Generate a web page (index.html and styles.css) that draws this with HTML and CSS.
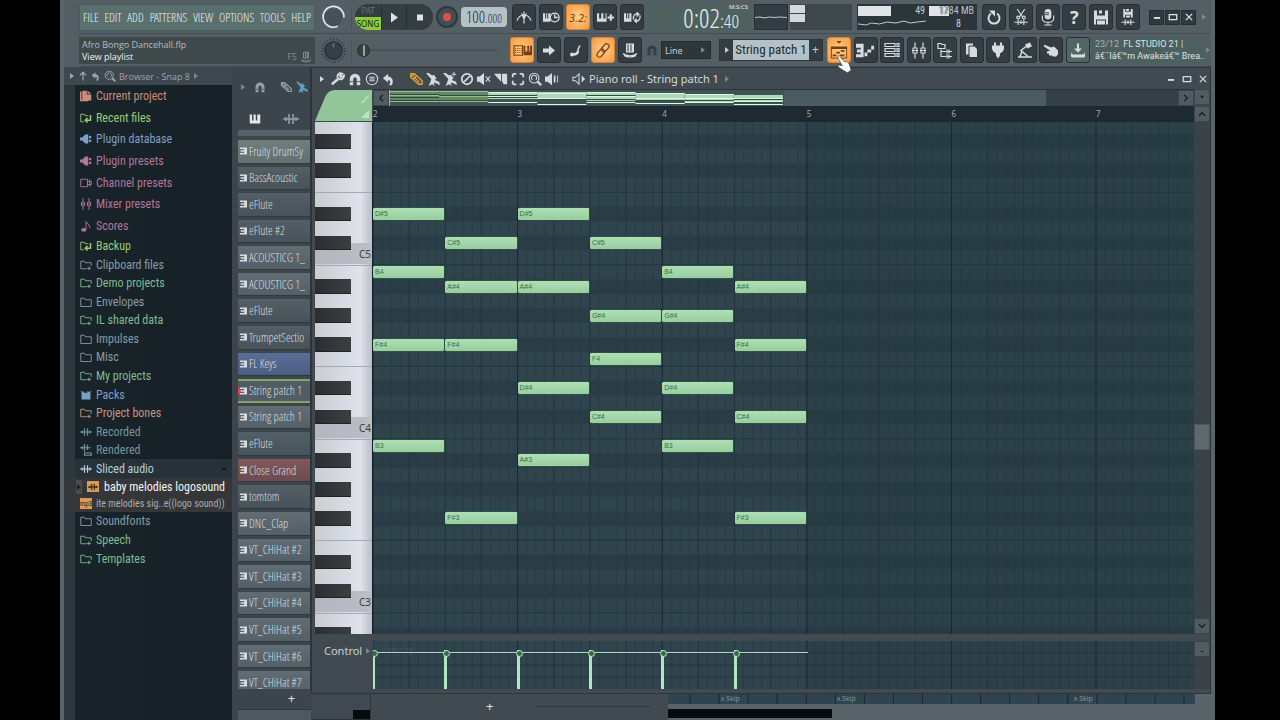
FILE: index.html
```html
<!DOCTYPE html>
<html lang="en">
<head>
<meta charset="utf-8">
<meta name="viewport" content="width=device-width, initial-scale=1">
<title>Piano roll - String patch 1</title>
<link rel="stylesheet" href="styles.css">
</head>
<body>
<svg class="sprite" aria-hidden="true">
  <symbol id="tri" viewBox="2 0 12 16"><path fill="currentColor" d="M4 2l8 6-8 6z"/></symbol>
  <symbol id="play" viewBox="0 0 16 16"><path fill="currentColor" d="M5 3l7 5-7 5z"/></symbol>
  <symbol id="stop" viewBox="0 0 16 16"><path fill="currentColor" d="M5 5h6v6H5z"/></symbol>
  <symbol id="metro" viewBox="0 0 16 16"><path class="s" d="M8 2v12M8 5C4 6 2 8 1 11M8 5c4 1 6 3 7 6"/><path fill="currentColor" d="M5 3l3 3 3-3-2 6H7z"/></symbol>
  <symbol id="wait" viewBox="0 0 16 16"><path fill="currentColor" d="M0 4h2v5h1V4h1v5h1V4h2v8H0z"/><circle class="s" cx="11" cy="8" r="4.2"/><path class="s" d="M11 5v3h3"/></symbol>
  <symbol id="keysplus" viewBox="0 0 16 16"><path fill="currentColor" d="M0 4h2v5h2V4h2v5h2V4h1v8H0zM10 7h2V5h2v2h2v2h-2v2h-2V9h-2z"/></symbol>
  <symbol id="keysloop" viewBox="0 0 16 16"><path fill="currentColor" d="M0 4h2v5h1V4h1v5h1V4h2v8H0z"/><path class="s" d="M9 10C8 6 11 4 13 5M15 6c1 4-2 6-4 5M12 3l2 2-2 2M12 9l-2 2 2 2"/></symbol>
  <symbol id="typing" viewBox="0 0 20 16"><path class="s" d="M1 3h9v10H1z"/><path stroke="currentColor" stroke-dasharray="1 1" d="M2 6h7M2 8h7M2 10h7"/><path fill="currentColor" d="M11 3h2v6h2V3h2v6h1V3h2v10h-9z"/></symbol>
  <symbol id="arrow" viewBox="0 0 16 16"><path fill="currentColor" d="M2 6h6V3l6 5-6 5v-3H2z"/></symbol>
  <symbol id="step" viewBox="0 0 16 16"><circle cx="4" cy="12" r="2" fill="currentColor"/><path fill="none" stroke="currentColor" stroke-width="2.5" d="M5 12c3 0 5-1 5-4"/><path fill="none" stroke="currentColor" stroke-width="1.500" d="M10 8c0-2 1-3 2-5"/></symbol>
  <symbol id="link" viewBox="0 0 16 16"><g class="s" transform="rotate(-50 8 8)"><rect x="0" y="5.5" width="9" height="5" rx="2.5"/><rect x="7" y="5.5" width="9" height="5" rx="2.5"/></g></symbol>
  <symbol id="hat" viewBox="0 0 16 16"><path fill="currentColor" d="M4 1h8v9H4z"/><path class="s" d="M1 11c3 3 11 3 14 0M2 13c3 2 9 2 12 0"/><path stroke="#30383c" d="M6 2v7M9 2v7"/></symbol>
  <symbol id="magnet" viewBox="0 0 16 16"><path fill="none" stroke="currentColor" stroke-width="4" d="M4 15V8a4 4 0 018 0v7"/><path stroke="#424b50" d="M1 11h5M10 11h5"/></symbol>
  <symbol id="playlist" viewBox="0 0 20 20"><path fill="#783c16" d="M7 0h6l-3 3zM1 6h18v3H1z"/><path fill="none" stroke="#783c16" d="M1.500 7v12h17V7"/><path stroke="#783c16" stroke-width="2" d="M3 16h4M7 13h4M12 11h4M11 16h5"/></symbol>
  <symbol id="pianoroll" viewBox="0 0 20 16"><path fill="currentColor" d="M0 1h8v14H0v-3h5v-2H1V7h4V5H0zM9 10h3v4H9zM12 7h4v3h-4zM16 3h3v4h-3z"/></symbol>
  <symbol id="rack" viewBox="0 0 16 16"><path class="s" d="M1 1h10v3H1zM1 6h10v3H1zM1 11h10v3H1zM13 1h2v3h-2zM13 6h2v3h-2zM13 11h2v3h-2z"/></symbol>
  <symbol id="mixer" viewBox="0 0 16 16"><path class="s" d="M4 0v5M4 11v5M12 0v5M12 11v5M2 5.500h4v5H2zM10 5.500h4v5h-4zM1 8h6M9 8h6"/></symbol>
  <symbol id="tree" viewBox="0 0 16 16"><path class="s" d="M1 1h3l1 1h3v4H1zM4 7v7h5M4 9h5M10 7v4M10 12v4M12 7v4M12 12v4M10 9h5M10 14h5"/></symbol>
  <symbol id="copy" viewBox="0 0 16 16"><path fill="currentColor" d="M2 1h7v11H2z"/><path fill="currentColor" stroke="#30383c" d="M5 3.500h5.500l3 3V15H5z"/></symbol>
  <symbol id="plug" viewBox="0 0 16 16"><path fill="currentColor" d="M4 0h2v3h4V0h2v3h2v3c0 2-2 4-4 5v2l-2 3-2-3v-2C4 10 2 8 2 6V3h2z"/></symbol>
  <symbol id="lamp" viewBox="0 0 16 16"><path fill="currentColor" d="M8 2l5-2 2 4-5 2z"/><path fill="none" stroke="currentColor" stroke-width="1.500" d="M9 4L4 8l7 6M1 14.500h14M5 9l-2 5"/></symbol>
  <symbol id="touch" viewBox="0 0 16 16"><path fill="currentColor" d="M1 2l7 3 3-1 4 4v4l-2 2-3 0-1-1H6l0-2-2 0 0-2 3-1L1 4z"/></symbol>
  <symbol id="download" viewBox="0 0 16 16"><path fill="currentColor" d="M7 1h2v5h3l-4 4-4-4h3z"/><path fill="currentColor" d="M1 9c0 2 1 3 3 3h8c2 0 3-1 3-3v5l-1 1H2l-1-1z"/></symbol>
  <symbol id="reload" viewBox="0 0 16 16"><path fill="none" stroke="currentColor" stroke-width="2" d="M5 4a5.500 5.500 0 106 0"/><path fill="currentColor" d="M3 1h6v6z"/></symbol>
  <symbol id="cut" viewBox="0 0 16 18"><path class="s" d="M4 0l6 9M12 0L6 9M1 14h14M5 11v6M8 12v4M11 11v6"/><circle class="s" cx="5" cy="9" r="1.500"/><circle class="s" cx="11" cy="9" r="1.500"/></symbol>
  <symbol id="mic" viewBox="0 0 16 18"><rect x="4.500" y="0" width="7" height="11" rx="3.500" fill="currentColor"/><path class="s" d="M2 7v3c0 2 2 4 4 4h4c2 0 4-2 4-4V7M8 14v3M4 17h8"/><path stroke="#30383c" d="M5 4h4M5 6h4"/></symbol>
  <symbol id="save" viewBox="0 0 16 16"><path fill="currentColor" d="M1 1h3v5h8V1h3v14h-2v-5H3v5H1zM6 1h3v3H6zM4 11h8v4H4z"/></symbol>
  <symbol id="savenew" viewBox="0 0 16 18"><path fill="currentColor" d="M3 0h2v3h6V0h2v9h-2V6H5v3H3zM6 0h3v2H6zM6 7h4v2H6z"/><path class="s" d="M1 14h14M5 11v6M8 12v4M11 11v6"/></symbol>
  <symbol id="min" viewBox="0 0 16 16"><path fill="currentColor" d="M3 8h10v3H3z"/></symbol>
  <symbol id="max" viewBox="0 0 16 16"><path fill="none" stroke="currentColor" stroke-width="2" d="M2 4h12v8H2z"/></symbol>
  <symbol id="close" viewBox="0 0 16 16"><path fill="none" stroke="currentColor" stroke-width="2" d="M3 3l10 10M13 3L3 13"/></symbol>
  <symbol id="wrench" viewBox="0 0 16 16"><path fill="none" stroke="currentColor" stroke-width="3" d="M1 14l7-6"/><path fill="none" stroke="currentColor" stroke-width="2" d="M13 2C9 0 6 4 8 7c3 3 7 1 7-3l-4 2-1-2z"/></symbol>
  <symbol id="menu" viewBox="0 0 16 16"><circle cx="8" cy="8" r="6.500" class="s"/><path class="s" d="M5 6h6M5 8h6M5 10h6"/></symbol>
  <symbol id="undo" viewBox="0 0 16 16"><path fill="currentColor" d="M1 7l6-5v3c5 0 7 6 4 10H8c2-3 2-6-1-6v3z"/></symbol>
  <symbol id="pencil" viewBox="0 0 16 16"><path fill="none" stroke="currentColor" stroke-width="1.600" d="M2 2h4l9 8v4h-4L2 6zM2 6l4-4M5 8l4-4M5 5l7 7"/></symbol>
  <symbol id="brush" viewBox="0 0 16 16"><path fill="currentColor" d="M0 1h3l4 3 2-1 3 4-2 2 5 2 1 4-2-1-4-2-1 1 1 3-3-2-4 2 2-5 1-3z"/></symbol>
  <symbol id="brushp" viewBox="0 0 16 16"><path fill="currentColor" d="M0 1h3l4 3 2-1 3 4-2 2 5 2 1 4-2-1-4-2-1 1 1 3-3-2-4 2 2-5 1-3zM12 0h1v2h2v1h-2v2h-1V3h-2V2h2z"/></symbol>
  <symbol id="ban" viewBox="0 0 16 16"><path fill="none" stroke="currentColor" stroke-width="2" d="M8 2a6 6 0 100 12A6 6 0 008 2zM4 12l8-8"/></symbol>
  <symbol id="mute" viewBox="0 0 16 16"><path fill="currentColor" d="M0 5h3l5-4v14l-5-4H0z"/><path class="s" d="M10 5l5 6M15 5l-5 6"/></symbol>
  <symbol id="slice" viewBox="0 0 16 16"><path fill="currentColor" d="M0 2h8v9zM9 2h6v12h-4l-2-4z"/></symbol>
  <symbol id="select" viewBox="0 0 16 16"><path fill="none" stroke="currentColor" stroke-width="2" d="M6 2H3L2 3v3M10 2h3l1 1v3M2 10v3l1 1h3M14 10v3l-1 1h-3"/></symbol>
  <symbol id="zoom" viewBox="0 0 16 16"><circle class="s" cx="7" cy="7" r="5.500"/><path class="s" d="M5 9a3 3 0 114 0"/><path stroke="currentColor" stroke-width="2.500" d="M11 11l4 4"/></symbol>
  <symbol id="playback" viewBox="0 0 16 16"><path fill="currentColor" d="M0 5h3l5-4v14l-5-4H0zM10 4h2v8h-2zM14 4h1v8h-1z"/></symbol>
  <symbol id="speaker" viewBox="0 0 16 16"><path class="s" d="M1 6h3l4-4v12l-4-4H1z"/><path fill="currentColor" d="M11 4l4 4-4 4z"/></symbol>
  <symbol id="up" viewBox="0 0 16 16"><path fill="none" stroke="currentColor" stroke-width="2" d="M8 15V2M3 7l5-5 5 5"/></symbol>
  <symbol id="chev" viewBox="0 0 16 16"><path fill="none" stroke="currentColor" stroke-width="2" d="M3 11l5-5 5 5"/></symbol>
  <symbol id="keys" viewBox="0 0 16 16"><path fill="currentColor" d="M1 2h3v8h2V2h3v8h2V2h4v12H1z"/></symbol>
  <symbol id="wave" viewBox="0 0 16 16"><path fill="none" stroke="currentColor" stroke-width="1.600" d="M0 8h16M3 6v4M6 3v10M10 3v10M13 6v4"/></symbol>
  <symbol id="rendered" viewBox="0 0 16 16"><path fill="none" stroke="currentColor" stroke-width="1.600" d="M0 5h14M3 3v4M6 0v10M10 1v7M6 12h9v3H6z"/></symbol>
  <symbol id="book" viewBox="0 0 16 16"><path fill="currentColor" d="M0 2h2v11h9v2H0zM3 1h6v5h6v8H3zM10 1l5 4h-5z"/></symbol>
  <symbol id="folder" viewBox="0 0 16 16"><path class="s" d="M1 3h5l1 2h8v9H1z"/></symbol>
  <symbol id="folderx" viewBox="0 0 16 16"><path class="s" d="M9 13H1V3h5l1 2h8v4M12 10v5M9.500 12.500h5"/></symbol>
  <symbol id="foldergo" viewBox="0 0 16 16"><path class="s" d="M5 13H1V3h5l1 2h4"/><path fill="none" stroke="currentColor" stroke-width="2" d="M14 4v7H7M10 8l-3 3 3 3"/></symbol>
  <symbol id="plugin" viewBox="0 0 16 16"><path fill="currentColor" d="M0 6h3l4-4h4v12H7l-4-4H0zM12 4h3v3h-3zM12 9h3v3h-3z"/></symbol>
  <symbol id="chan" viewBox="0 0 16 16"><path class="s" d="M1 3h9v10H1zM13 3v10M10 6h5v4h-5z"/></symbol>
  <symbol id="note" viewBox="0 0 16 16"><ellipse cx="5" cy="13" rx="3.500" ry="2.500" fill="currentColor"/><path class="s" d="M8 13V2l5 6v3"/></symbol>
  <symbol id="packs" viewBox="0 0 16 16"><path fill="currentColor" d="M0 2l4 2 1-2v3h5V2l2 2 4-2-2 2v10H2V4z"/></symbol>
  <symbol id="plugch" viewBox="0 0 10 10"><path fill="currentColor" d="M0 0h10v10H0V8h6V6H1V4h5V2H0z"/></symbol>
  <symbol id="hand" viewBox="0 0 16 20"><path fill="#fff" stroke="#222" stroke-width=".6" d="M1 1c1-1 2 0 3 1l4 5 5 1 2 5 1 4-4 3-5-3-6-4 1-2 4 1-5-9z"/></symbol>
</svg>

<div class="app">
  <header class="toolbar">
    <div class="bar">
      <nav class="menus">
        <button>FILE</button><button>EDIT</button><button>ADD</button><button>PATTERNS</button><button>VIEW</button><button>OPTIONS</button><button>TOOLS</button><button>HELP</button>
      </nav>
      <div class="knobcell"><svg class="knob" viewBox="0 0 24 24"><circle cx="12" cy="12" r="8.500" fill="#465056"/><path fill="none" stroke="#e2e8ea" stroke-width="1.600" d="M16 20.500A10 10 0 1122 12"/></svg></div>
      <div class="transport">
        <div class="mode"><span class="pat">PAT</span><span class="song">SONG</span></div>
        <button aria-label="Play"><svg class="i"><use href="#play"/></svg></button>
        <button class="stop" aria-label="Stop"><svg class="i"><use href="#stop"/></svg></button>
      </div>
      <button class="rec" aria-label="Record"><span class="recdot"></span></button>
      <div class="tempo"><span>100</span><small>.000</small></div>
      <div class="btns">
        <button class="b" aria-label="Metronome"><svg class="i"><use href="#metro"/></svg></button>
        <button class="b" aria-label="Wait for input"><svg class="i w"><use href="#wait"/></svg></button>
        <button class="b on">3.2:</button>
        <button class="b" aria-label="Overdub"><svg class="i w"><use href="#keysplus"/></svg></button>
        <button class="b" aria-label="Loop record"><svg class="i w"><use href="#keysloop"/></svg></button>
      </div>
      <div class="time"><span class="clock">0:02<small>:40</small></span><span class="unit">M:S:CS</span></div>
      <div class="scope"><svg viewBox="0 0 32 26" preserveAspectRatio="none"><path fill="none" stroke="#c5d0d3" d="M0 13.500l5-.5 4 1 6-1 5 .5 5-.5 7 .5"/></svg></div>
      <div class="peak"><i></i><i></i></div>
      <div class="cpu">
        <i class="load"></i><span>49</span><i class="mem"></i><span class="mb">1784 MB</span>
        <svg class="cpuline" viewBox="0 0 70 8"><path fill="none" stroke="#c5d0d3" d="M0 5l8 1 6-2 8 1 8-2 9 1 8-2 7 2 7-1 9-1"/></svg><span class="poly">8</span>
      </div>
      <div class="btns files-group">
        <button class="b" aria-label="Undo"><svg class="i"><use href="#reload"/></svg></button>
        <button class="b" aria-label="Cut"><svg class="i"><use href="#cut"/></svg></button>
        <button class="b" aria-label="Record audio"><svg class="i"><use href="#mic"/></svg></button>
        <button class="b q" aria-label="Help">?</button>
        <button class="b" aria-label="Save"><svg class="i"><use href="#save"/></svg></button>
        <button class="b" aria-label="Save as"><svg class="i"><use href="#savenew"/></svg></button>
      </div>
      <div class="winctl">
        <button aria-label="Minimize"><svg class="xs"><use href="#min"/></svg></button><button aria-label="Maximize"><svg class="xs"><use href="#max"/></svg></button><button aria-label="Close"><svg class="xs"><use href="#close"/></svg></button>
      </div>
      <svg class="tiny faint more"><use href="#tri"/></svg>
    </div>

    <div class="bar">
      <div class="hint"><div><p class="file">Afro Bongo Dancehall.flp</p><p class="tip">View playlist</p></div><div class="short">F5 <svg class="s12"><use href="#hat"/></svg></div></div>
      <div class="knobcell"><svg class="knob" viewBox="0 0 24 24"><circle cx="12" cy="12" r="11" fill="none" stroke="#343d42" stroke-width="2" stroke-dasharray="1 2"/><circle cx="12" cy="12" r="8.500" fill="#363f45" stroke="#252d31"/><path stroke="#66737a" stroke-width="1.500" d="M12 5v4"/></svg></div>
      <div class="pos"><input type="range" min="0" max="100" value="0" aria-label="Song position"></div>
      <div class="btns">
        <button class="b on" aria-label="Typing keyboard"><svg class="i w"><use href="#typing"/></svg></button>
        <button class="b" aria-label="Step"><svg class="i"><use href="#arrow"/></svg></button>
        <button class="b" aria-label="Slide"><svg class="i"><use href="#step"/></svg></button>
        <button class="b on" aria-label="Link"><svg class="i"><use href="#link"/></svg></button>
        <button class="b" aria-label="Hat"><svg class="i"><use href="#hat"/></svg></button>
      </div>
      <div class="snap"><svg class="s12 dim"><use href="#magnet"/></svg><button class="snapbtn">Line<svg class="tiny faint"><use href="#tri"/></svg></button></div>
      <div class="pattern"><button aria-label="Pattern list"><svg class="tiny"><use href="#tri"/></svg></button><span class="pname">String patch 1</span><button aria-label="Add pattern">+</button></div>
      <div class="btns panels-group">
        <button class="b on" aria-label="View playlist"><svg class="i big"><use href="#playlist"/></svg><svg class="cursor"><use href="#hand"/></svg></button>
        <button class="b" aria-label="Piano roll"><svg class="i w"><use href="#pianoroll"/></svg></button>
        <button class="b" aria-label="Channel rack"><svg class="i"><use href="#rack"/></svg></button>
        <button class="b" aria-label="Mixer"><svg class="i"><use href="#mixer"/></svg></button>
        <button class="b" aria-label="Browser"><svg class="i"><use href="#tree"/></svg></button>
        <button class="b" aria-label="Copy"><svg class="i"><use href="#copy"/></svg></button>
        <button class="b" aria-label="Plugins"><svg class="i"><use href="#plug"/></svg></button>
        <button class="b" aria-label="Tempo tapper"><svg class="i"><use href="#lamp"/></svg></button>
        <button class="b" aria-label="Touch"><svg class="i"><use href="#touch"/></svg></button>
        <button class="b dl" aria-label="Download"><svg class="i"><use href="#download"/></svg></button>
      </div>
      <div class="news"><div><p><span class="date">23/12</span> FL STUDIO 21 |</p><p>â€˜Iâ€™m Awakeâ€™ Brea..</p></div><svg class="tiny faint"><use href="#tri"/></svg></div>
    </div>
  </header>

  <div class="work">
    <aside class="browser">
      <div class="bhead"><svg class="tiny"><use href="#tri"/></svg><svg class="s10"><use href="#up"/></svg><svg class="s10"><use href="#undo"/></svg><svg class="s12"><use href="#zoom"/></svg><span>Browser - Snap 8</span><svg class="tiny faint"><use href="#tri"/></svg></div>
      <div class="bbody">
        <ul class="tree top">
          <li class="c-red"><svg class="s12"><use href="#book"/></svg>Current project</li>
          <li class="c-lime"><svg class="s12"><use href="#foldergo"/></svg>Recent files</li>
          <li class="c-blue"><svg class="s12"><use href="#plugin"/></svg>Plugin database</li>
          <li class="c-pink"><svg class="s12"><use href="#plugin"/></svg>Plugin presets</li>
          <li class="c-pink"><svg class="s12"><use href="#chan"/></svg>Channel presets</li>
          <li class="c-pink"><svg class="s12"><use href="#mixer"/></svg>Mixer presets</li>
          <li class="c-pink"><svg class="s12"><use href="#note"/></svg>Scores</li>
        </ul>
        <ul class="tree mid">
          <li class="c-lime"><svg class="s12"><use href="#foldergo"/></svg>Backup</li>
          <li class="c-gray"><svg class="s12"><use href="#folderx"/></svg>Clipboard files</li>
          <li class="c-green"><svg class="s12"><use href="#folderx"/></svg>Demo projects</li>
          <li class="c-gray"><svg class="s12"><use href="#folder"/></svg>Envelopes</li>
          <li class="c-green"><svg class="s12"><use href="#folderx"/></svg>IL shared data</li>
          <li class="c-gray"><svg class="s12"><use href="#folder"/></svg>Impulses</li>
          <li class="c-gray"><svg class="s12"><use href="#folder"/></svg>Misc</li>
          <li class="c-green"><svg class="s12"><use href="#folderx"/></svg>My projects</li>
          <li class="c-sky"><svg class="s12"><use href="#packs"/></svg>Packs</li>
          <li class="c-orange"><svg class="s12"><use href="#folderx"/></svg>Project bones</li>
          <li class="c-teal"><svg class="s12"><use href="#wave"/></svg>Recorded</li>
          <li class="c-teal"><svg class="s12"><use href="#rendered"/></svg>Rendered</li>
          <li class="c-open"><svg class="s12"><use href="#wave"/></svg>Sliced audio<span class="caret"></span></li>
        </ul>
        <ul class="tree files">
          <li class="sel"><span class="grip"><svg class="tiny"><use href="#tri"/></svg></span><span class="wav"><svg class="s10"><use href="#wave"/></svg></span>baby melodies logosound</li>
          <li class="mp3"><span class="wav">mp3</span>ite melodies sig..e((logo sound))</li>
        </ul>
        <ul class="tree end">
          <li class="c-gray"><svg class="s12"><use href="#folder"/></svg>Soundfonts</li>
          <li class="c-green"><svg class="s12"><use href="#folderx"/></svg>Speech</li>
          <li class="c-green"><svg class="s12"><use href="#folderx"/></svg>Templates</li>
        </ul>
      </div>
    </aside>

    <section class="rackcol">
      <div class="rackhead">
        <div class="rtools"><svg class="tiny faint"><use href="#tri"/></svg><svg class="s12"><use href="#magnet"/></svg><svg class="s12 push"><use href="#pencil"/></svg><svg class="s12 c-brush"><use href="#brush"/></svg></div>
        <div class="rtabs"><svg class="s12 bright"><use href="#keys"/></svg><svg class="s16"><use href="#wave"/></svg></div>
      </div>
      <div class="rackclip"><div class="sliver"></div><div class="channels" id="channels"></div></div>
      <button class="addch" aria-label="Add channel">+</button>
      <div class="rackfoot"></div>
    </section>

    <main class="stage">
      <section class="roll">
        <div class="title">
          <svg class="tiny"><use href="#tri"/></svg>
          <div class="tools">
            <svg class="s14"><use href="#wrench"/></svg><svg class="s14"><use href="#magnet"/></svg><svg class="s14"><use href="#menu"/></svg><svg class="s14"><use href="#undo"/></svg>
          </div>
          <div class="tools draw">
            <svg class="s14 amber"><use href="#pencil"/></svg><svg class="s14"><use href="#brush"/></svg><svg class="s14"><use href="#brushp"/></svg><svg class="s14"><use href="#ban"/></svg><svg class="s14"><use href="#mute"/></svg><svg class="s14"><use href="#slice"/></svg><svg class="s14"><use href="#select"/></svg><svg class="s14"><use href="#zoom"/></svg><svg class="s14"><use href="#playback"/></svg>
          </div>
          <svg class="s14"><use href="#speaker"/></svg>
          <h1>Piano roll - String patch 1</h1><svg class="tiny faint"><use href="#tri"/></svg>
          <div class="rollctl"><button aria-label="Minimize"><svg class="s10"><use href="#min"/></svg></button><button aria-label="Maximize"><svg class="s10"><use href="#max"/></svg></button><button aria-label="Close"><svg class="s10"><use href="#close"/></svg></button></div>
        </div>
        <div class="rollgrid">
          <svg class="corner" viewBox="0 0 58 32" preserveAspectRatio="none"><path fill="#93c59a" d="M0 31L10 8Q13 1 20 1h37v30z"/><path fill="none" stroke="#c0e2c4" stroke-width="1.500" d="M46 13c5 0 4-6 8-6"/><path fill="#c0e2c4" d="M54 20v8h-8z"/></svg>
          <div class="overview"><button class="sb" aria-label="Scroll left"><svg class="s10 left"><use href="#chev"/></svg></button><div class="mini"><svg id="mini" viewBox="0 0 790 16" preserveAspectRatio="none"></svg></div><button class="sb" aria-label="Scroll right"><svg class="s10 right"><use href="#chev"/></svg></button></div>
          <div class="sb">•</div>
          <div class="ruler" id="ruler"></div>
          <button class="sb" aria-label="Scroll up"><svg class="s10"><use href="#chev"/></svg></button>
          <div class="piano" id="piano"></div>
          <div class="canvas" id="canvas"><svg id="lines" viewBox="0 0 821 512" preserveAspectRatio="none"></svg></div>
          <div class="vscroll"><div class="thumb"></div><button class="sb" aria-label="Scroll down"><svg class="s10 down"><use href="#chev"/></svg></button></div>
          <div class="split">. . . .</div>
          <div class="control">Control<svg class="tiny faint"><use href="#tri"/></svg></div>
          <div class="velocity" id="velocity"><svg id="vlines" viewBox="0 0 821 48" preserveAspectRatio="none"></svg><span class="vname">Velocity</span><div class="vline"></div></div>
          <div class="vscroll"><button class="sb" aria-label="Zoom out">-</button></div>
        </div>
      </section>
      <div class="under">
        <div class="uleft"><div class="ublack"></div></div>
        <div class="upanel"><span class="plus">+</span><span class="hbar"></span></div>
        <div class="uplay"><div class="uclips"><svg id="ulines" viewBox="0 0 526 10" preserveAspectRatio="none"></svg><span class="clip c1">ʌ Skip</span><span class="clip c2">ʌ Skip</span><span class="clip c3">ʌ Skip</span></div><div class="ublk"></div></div>
      </div>
    </main>
  </div>
</div>
<script src="script.js"></script>
</body>
</html>
```
FILE: styles.css
```css
:root { --narrow: "Open Sans Condensed Light", "Roboto Condensed", Roboto, "Liberation Sans", sans-serif; --list: "Roboto Condensed", Roboto, "Liberation Sans", sans-serif; }
* { box-sizing: border-box; }
body { margin: 0; background: #000; color: #c6d0d4; font-family: "Noto Sans", sans-serif; font-size: 11px; }
p, ul, h1 { margin: 0; padding: 0; font-weight: 400; }
ul { list-style: none; }
button { margin: 0; padding: 0; border: 0; background: none; color: inherit; font: inherit; display: flex; align-items: center; justify-content: center; }
svg { display: block; flex: none; }
.sprite { position: absolute; width: 0; height: 0; }
.s { fill: none; stroke: currentColor; stroke-width: 1.2; }
.tiny { width: 6px; height: 8px; }
.xs, .s10 { width: 10px; height: 10px; }
.s12 { width: 12px; height: 12px; }
.s14 { width: 14px; height: 14px; }
.s16 { width: 16px; height: 16px; }
.faint { color: #7b878d; }
.dim { color: #353e43; }
.push { margin-left: auto; }
.left { transform: rotate(-90deg); }
.right { transform: rotate(90deg); }
.down { transform: rotate(180deg); }

.app { margin: 0 65px 0 60px; height: 100vh; display: flex; flex-direction: column; background: #434d53; border: solid #59646a; border-width: 0 4px; overflow: hidden; }

/* top toolbar */
.toolbar { background: #535e65; flex: none; padding: 1px 0 0 15px; }
.bar { display: flex; align-items: center; height: 33px; border-bottom: 1px solid #424c52; }
.menus { width: 236px; height: 27px; display: flex; align-items: center; justify-content: space-between; padding: 0 3px; background: #5a706e; border: 1px solid #4a5b5b; color: #eaf3f1; font-family: var(--narrow); font-size: 12px; }
.knobcell { width: 37px; display: flex; justify-content: center; border-right: 1px solid #48535a; }
.knob { width: 25px; height: 25px; }
.transport { display: flex; width: 78px; height: 26px; margin-left: 3px; background: #343d42; border-radius: 13px; overflow: hidden; color: #dde4e6; }
.transport button { width: 25px; border-left: 1px solid #272f33; }
.transport .stop { flex: 1; }
.mode { width: 26px; display: flex; flex-direction: column; text-align: center; font-size: 8px; line-height: 13px; }
.pat { color: #667077; }
.song { background: #8bcc3c; color: #0f2406; }
.rec { width: 22px; height: 22px; margin: 0 3px; border-radius: 50%; background: #454e54; border: 2px solid #2f383d; }
.recdot { width: 8px; height: 8px; border-radius: 50%; background: #e0504b; }
.tempo { width: 46px; height: 20px; margin-right: 5px; border-radius: 4px; background: #b5c1c8; color: #1f292e; display: flex; align-items: baseline; justify-content: center; font-family: var(--narrow); font-size: 16px; line-height: 20px; }
.tempo small { font-size: 12px; }
.btns { display: flex; gap: 3px; }
.files-group { width: 158px; gap: 0; justify-content: space-between; }
.panels-group { width: 263px; gap: 0; justify-content: space-between; }
.b { width: 24px; height: 26px; border: 1px solid #272f34; border-radius: 3px; background: #343d42; color: #d5dde0; position: relative; }
.b.on { background: radial-gradient(#ffcf85, #f59a43); border-color: #e5802d; color: #783c16; font-style: italic; font-size: 11px; }
.q { font-size: 18px; font-weight: 700; }
.i { width: 16px; height: 17px; }
.i.w { width: 19px; }
.i.big { width: 18px; height: 20px; }
.cursor { position: absolute; left: 9px; top: 17px; width: 14px; height: 18px; z-index: 5; }
.b.dl { background: #506763; }
.time { width: 104px; height: 26px; margin-left: 3px; background: #4e615f; position: relative; display: flex; justify-content: flex-end; padding-right: 12px; color: #e7eeec; }
.clock { font-family: var(--narrow); font-size: 26px; line-height: 28px; }
.clock small { font-size: 19px; }
.unit { position: absolute; right: 3px; top: 0; font-size: 6px; line-height: 7px; }
.scope { width: 34px; height: 26px; margin-left: 3px; background: #333d43; border: 1px solid #262f34; }
.scope svg { width: 100%; height: 100%; }
.peak { width: 62px; height: 26px; margin: 0 5px 0 2px; background: #3d474c; display: flex; flex-direction: column; gap: 1px; }
.peak i { width: 15px; height: 8px; background: #d2d9dc; }
.peak i:first-child { margin-top: 1px; }
.cpu { width: 120px; height: 26px; margin-right: 5px; background: #2b353a; display: grid; grid-template-columns: 34px 34px 1fr; grid-template-rows: 13px 13px; font-family: var(--list); font-size: 10px; line-height: 13px; text-align: right; position: relative; }
.cpu .load { background: #dfe5e7; margin: 2px 0 1px 1px; }
.cpu .mem { position: absolute; left: 72px; top: 2px; width: 20px; height: 10px; background: #dfe5e7; }
.mb { padding-right: 3px; position: relative; color: #b9c2c5; text-shadow: 0 0 1px #2b353a, 0 0 1px #2b353a; }
.cpuline { width: 68px; height: 8px; grid-column: 1 / 3; margin: 2px 1px; }
.poly { padding-right: 16px; }
.winctl { display: flex; gap: 1px; margin-left: 9px; }
.winctl button { width: 15px; height: 15px; background: #30393e; border: 1px solid #252d31; color: #dde4e6; }
.more { margin: 0 4px 0 auto; }
.hint { width: 236px; height: 27px; padding: 0 3px; background: #3f494c; display: flex; justify-content: space-between; align-items: flex-end; font-family: "Open Sans", sans-serif; font-size: 9px; line-height: 12px; }
.hint > div { padding-bottom: 1px; }
.file { color: #b3bdc0; }
.tip { color: #edf2f3; }
.short { display: flex; gap: 3px; color: #7e898d; }
.pos { width: 158px; padding: 0 12px 0 5px; }
.pos input { -webkit-appearance: none; appearance: none; display: block; width: 100%; margin: 0; height: 16px; background: linear-gradient(#48535a, #48535a) center / 100% 2px no-repeat; }
.pos input::-webkit-slider-thumb { -webkit-appearance: none; width: 13px; height: 13px; border-radius: 50%; border: 1px solid #232b2e; background: linear-gradient(90deg, #37423f 5px, #93a59f 5px, #93a59f 7px, #37423f 7px); }
.snap { width: 73px; display: flex; align-items: center; gap: 3px; margin-left: 4px; }
.snapbtn { width: 50px; height: 18px; padding: 0 4px 0 3px; justify-content: space-between; background: #2d363b; border: 1px solid #242c30; font-size: 9px; }
.pattern { width: 104px; height: 22px; margin-right: 4px; display: flex; border: 1px solid #2b3439; }
.pattern button { width: 13px; background: #333c41; font-size: 12px; line-height: 12px; }
.pname { flex: 1; background: #b3c1c8; color: #202a30; font-family: var(--list); font-size: 13px; line-height: 20px; text-align: center; white-space: nowrap; }
.news { flex: 1; min-width: 0; height: 27px; margin: 0 2px; padding-left: 3px; background: #4d605f; display: flex; align-items: center; justify-content: space-between; font-family: Roboto, sans-serif; font-size: 9px; line-height: 12px; color: #dbe5e4; white-space: nowrap; }
.date { color: #a5b3b3; padding-right: 2px; }

/* workspace */
.work { flex: 1; min-height: 0; display: flex; background: #3d474e; }
.browser { width: 168px; flex: none; display: flex; flex-direction: column; background: #2c373e; }
.bhead { height: 18px; display: flex; align-items: center; gap: 3px; padding-left: 5px; background: #3d474e; color: #9aa6ab; font-size: 9px; }
.bhead span { font-family: "Open Sans", sans-serif; }
.bbody { flex: 1; min-height: 0; margin-left: 11px; background: linear-gradient(90deg, #18242a, #171f27); font-family: var(--list); font-size: 12px; }
.tree { display: grid; grid-auto-rows: 1fr; margin-left: -10px; }
.tree li { display: flex; align-items: center; gap: 4px; padding-left: 15px; white-space: nowrap; }
.tree.top { height: 152px; }
.tree.mid { height: 241px; }
.tree.end { height: 56px; }
.tree.files { height: 34px; background: #353638; }
.c-red { color: #cb8d7c; }
.c-lime { color: #9acb73; }
.c-blue { color: #7f9fc7; }
.c-sky { color: #7ba0c5; }
.c-pink { color: #b37698; }
.c-gray { color: #879ba3; }
.c-green { color: #7fbb91; }
.c-orange { color: #cd9478; }
.c-teal { color: #75959a; }
.tree .c-open { color: #b9d2d6; background: #263139; margin-left: 10px; padding-left: 5px; }
.caret { margin: 0 6px 0 auto; width: 4px; height: 2px; background: #11181c; }
.wav { width: 12px; height: 11px; background: #d99a5b; color: #2a1b0d; display: flex; align-items: center; justify-content: center; font-size: 7px; }
.grip { width: 6px; height: 14px; background: #4a4b4c; color: #222; display: flex; align-items: center; }
.tree .sel { color: #f3f5f5; padding-left: 11px; gap: 5px; }
.tree .mp3 { color: #a8adaf; font-size: 10px; }

.rackcol { width: 79px; flex: none; padding-left: 6px; display: flex; flex-direction: column; background: #3b454b; }
.rackhead { height: 63px; padding-top: 11px; border-right: 1px solid #2b3439; color: #93a0a6; }
.rtools { height: 17px; display: flex; align-items: center; gap: 4px; padding: 0 2px; }
.rtools .s12:nth-child(2) { margin-left: 4px; }
.c-brush { color: #5f9fbd; }
.rtabs { display: flex; align-items: center; justify-content: space-around; padding-top: 13px; height: 34px; }
.bright { color: #e5eaec; }
.rackclip { flex: 1; min-height: 0; overflow: hidden; border-right: 1px solid #2b3439; }
.sliver { height: 6px; margin-bottom: 4px; background: #56626a; }
.channels { height: 555px; display: grid; grid-auto-rows: 1fr; gap: 3px; }
.ch { display: flex; align-items: center; gap: 2px; padding-left: 2px; overflow: hidden; white-space: nowrap; background: linear-gradient(#535f66, #475259); border-bottom: 1px solid #2f393e; color: #d5dde0; font-family: var(--narrow); font-size: 12px; }
.ch svg { width: 7px; height: 8px; }
.ch.light { background: linear-gradient(#6f7e7d, #62706f); }
.ch.mid { background: linear-gradient(#616d73, #546067); }
.ch.blue { background: linear-gradient(#5a6d96, #4c5d83); }
.ch.red { background: linear-gradient(#80585b, #6d4b4f); }
.ch.cur { border-top: 2px solid #84a562; border-bottom: 2px solid #84a562; padding-left: 0; gap: 2px; background: #515d63; }
.cur::before { content: ""; width: 0; height: 0; margin-right: -4px; border: solid transparent; border-width: 4px 0 4px 4px; border-left-color: #e04556; }
.addch { height: 20px; padding: 0 0 3px 34px; color: #dfe5e7; font-size: 13px; line-height: 14px; }
.rackfoot { height: 11px; background: #4d585f; border-top: 1px solid #2e373c; }

/* piano roll */
.stage { flex: 1; min-width: 0; display: flex; flex-direction: column; }
.roll { flex: 1; min-height: 0; display: flex; flex-direction: column; background: #414a50; border: 1px solid #2c353a; padding: 0 0 4px 3px; }
.title { height: 21px; flex: none; display: flex; align-items: center; padding-left: 4px; color: #d3dbde; }
.tools { display: flex; gap: 3px; margin-left: 6px; }
.draw { margin: 0 13px 0 13px; }
.amber { color: #dda032; }
.title h1 { font-size: 11px; margin: 0 5px 0 3px; white-space: nowrap; }
.rollctl { margin: 0 2px 0 auto; display: flex; gap: 6px; }
.rollgrid { flex: 1; min-height: 0; display: grid; grid-template-columns: 58px minmax(0, 1fr) 16px; grid-template-rows: 17px 16px minmax(0, 1fr) 7px 48px; }
.corner { grid-row: 1 / 3; width: 100%; height: 100%; }
.overview { display: flex; border-top: 1px solid #2a3338; }
.mini { flex: 1; background: #343f46; }
.mini svg { width: 100%; height: 100%; }
.sb { width: 16px; height: 16px; background: #505b62; border: 1px solid #3a444a; color: #161d20; text-align: center; line-height: 13px; font-size: 11px; }
.ruler { position: relative; overflow: hidden; background: #1d2a31; color: #9fabb0; font-size: 8px; line-height: 16px; }
.ruler span { position: absolute; }
.piano { position: relative; overflow: hidden; background: linear-gradient(90deg, #c9ced2, #dfe2eb 80%, #b9bec8); border-right: 1px solid #16222a; }
.piano div { position: absolute; left: 0; right: 0; }
.piano .bk { right: 21px; background: linear-gradient(90deg, #2c2f31, #3c3f41); border-bottom: 1px solid #222; }
.piano .ck { background: linear-gradient(90deg, #b3b6be, #bcbec6); color: #383e43; font-size: 10px; text-align: right; line-height: 22px; padding-right: 1px; }
.piano .ln { height: 1px; background: #a4a8af; }
.canvas, .velocity { position: relative; overflow: hidden; background: #30444d; }
.canvas svg, .velocity svg { position: absolute; left: 0; top: 0; width: 100%; height: 100%; }
.nt { position: absolute; height: 14px; padding-left: 2px; border: 1px solid #2e5340; border-width: 1px 1px 1px 0; border-radius: 2px; background: linear-gradient(#aedfb4, #98cd9f); color: #39704a; font-family: "Liberation Sans", sans-serif; font-size: 7px; line-height: 12px; }
.vscroll { background: #394248; display: flex; flex-direction: column; justify-content: flex-end; position: relative; }
.vscroll:last-child { justify-content: flex-start; }
.thumb { position: absolute; left: 0; top: 59%; width: 16px; height: 26px; background: #5d686f; border: 1px solid #4b565c; }
.split { grid-column: 1 / 4; text-align: center; font-size: 8px; line-height: 4px; color: #252d31; }
.control { display: flex; gap: 3px; height: 19px; align-items: center; padding-left: 9px; font-size: 11px; }
.vname { position: absolute; left: 8px; top: 3px; color: #40545d; font-size: 9px; line-height: 12px; }
.vline { position: absolute; left: 0; top: 11px; width: 53%; height: 1px; background: #b9d4c3; }
.vel { position: absolute; top: 9px; bottom: 0; width: 5px; margin-left: -2px; background: linear-gradient(#b1e6be, #b1e6be) center / 3px 100% no-repeat; }
.vel::before { content: ""; display: block; width: 5px; height: 5px; border: 1px solid #b1e6be; border-radius: 50%; background: #3a6650; }
.under { height: 26px; display: flex; background: #40494f; flex: none; }
.uleft { width: 59px; display: flex; align-items: flex-end; justify-content: flex-end; border-bottom: 1px solid #2a3338; }
.ublack { width: 17px; height: 9px; background: #060c0e; }
.upanel { width: 298px; display: flex; align-items: center; justify-content: space-between; padding: 0 18px 2px 115px; background: #424a51; color: #dfe5e7; font-size: 13px; border-left: 1px solid #2d363b; }
.hbar { width: 114px; height: 1px; background: #2c353a; }
.uplay { flex: 1; min-width: 0; display: flex; flex-direction: column; background: #58636a; }
.uclips { height: 10px; margin-right: 16px; background: #2f444f; position: relative; }
.uclips svg { width: 100%; height: 100%; }
.clip { position: absolute; top: 0; color: #84929a; font-size: 7px; line-height: 9px; }
.c1 { left: 10%; }
.c2 { left: 32%; }
.c3 { left: 77%; }
.ublk { width: 164px; height: 9px; margin-top: 5px; background: #060c0e; }
```
FILE: script.js
```js
const channels = [
  ["Fruity DrumSy", "light"], ["BassAcoustic", ""], ["eFlute", ""], ["eFlute #2", ""],
  ["ACOUSTICG 1_", "mid"], ["ACOUSTICG 1_", "mid"], ["eFlute", ""], ["TrumpetSectio", ""],
  ["FL Keys", "blue"], ["String patch 1", "cur"], ["String patch 1", "mid"], ["eFlute", ""],
  ["Close Grand", "red"], ["tomtom", ""], ["DNC_Clap", "mid"], ["VT_CHiHat #2", "mid"],
  ["VT_CHiHat #3", "mid"], ["VT_CHiHat #4", "mid"], ["VT_CHiHat #5", "mid"],
  ["VT_CHiHat #6", "mid"], ["VT_CHiHat #7", "mid"]
];
document.getElementById("channels").innerHTML = channels.map(([name, kind]) =>
  `<div class="ch ${kind}"><svg><use href="#plugch"/></svg>${name}</div>`).join("");

// Geometry of the roll in view-box units: one bar, one semitone row, centre of row C5.
const W = 821, H = 512, BAR = 144.6, ROW = 14.5, C5 = 135.5;
const names = ["C", "C#", "D", "D#", "E", "F", "F#", "G", "G#", "A", "A#", "B"];
const centre = (pitch) => C5 - (pitch - 60) * ROW;
const pct = (v, total) => (v / total * 100).toFixed(3) + "%";

let rows = "", keys = "";
for (let p = 34; p <= 69; p++) {
  const n = p % 12, y = centre(p), top = y - ROW / 2;
  if (names[n].includes("#")) {
    rows += `<rect x="0" y="${top}" width="${W}" height="${ROW}" fill="#2a3d46"/>`;
    keys += `<div class="bk" style="top:${pct(top, H)};height:${pct(ROW, H)}"></div>`;
  }
  if (n === 0) {
    keys = `<div class="ck" style="top:${pct(top - 7, H)};height:${pct(21, H)}">C${p / 12}</div>` + keys;
  }
  if (n === 0 || n === 5) {
    rows += `<path stroke="#22343d" d="M0 ${top + ROW}H${W}"/>`;
    keys += `<div class="ln" style="top:${pct(top + ROW, H)}"></div>`;
  }
}
const verticals = (h) => {
  let out = "";
  for (let i = 0; i <= 91; i++) {
    const x = (i * BAR / 16).toFixed(1);
    const c = i % 16 === 0 ? "#17272f" : i % 4 === 0 ? "#22353e" : "#293c45";
    out += `<path stroke="${c}" d="M${x} 0V${h}"/>`;
  }
  return out + `<rect x="${3 * BAR}" width="${W}" height="${h}" fill="#1d3038" opacity=".18"/>`;
};
document.getElementById("lines").innerHTML = rows + verticals(H);
document.getElementById("piano").innerHTML = keys;
document.getElementById("vlines").innerHTML =
  verticals(48) + `<path stroke="#22353e" d="M0 12H${W}M0 24H${W}M0 36H${W}"/>`;

const chords = [["D#5", "B4", "F#4", "B3"], ["C#5", "A#4", "F#4", "F#3"], ["D#5", "A#4", "D#4", "A#3"],
  ["C#5", "G#4", "F4", "C#4"], ["B4", "G#4", "D#4", "B3"], ["A#4", "F#4", "C#4", "F#3"]];
let notes = "", vels = "";
chords.forEach((chord, i) => {
  const left = pct(i * BAR / 2, W);
  chord.forEach((name) => {
    const pitch = names.indexOf(name.slice(0, -1)) + 12 * Number(name.slice(-1));
    notes += `<div class="nt" style="left:${left};top:${pct(centre(pitch) - 7, H)};width:${pct(BAR / 2, W)}">${name}</div>`;
  });
  vels += `<div class="vel" style="left:${left}"></div>`;
});
document.getElementById("canvas").insertAdjacentHTML("beforeend", notes);
document.getElementById("velocity").insertAdjacentHTML("beforeend", vels);

// Each overview block: top, fill height, offsets of bright lines, offsets of dark lines.
const blocks = [
  [1, 11, [0, 4, 10], [3, 6, 9]], [1, 11, [0, 5, 10], [4, 9]], [2, 7, [0, 4, 10], [3, 5]],
  [2, 7, [1, 6, 12], [7]], [2, 9, [0, 4, 10], [3, 7]], [3, 8, [0, 5, 10], [7]],
  [4, 8, [0, 4, 8], [6]], [5, 7, [3, 6, 9], [4, 7]]
];
let mini = `<rect x="395" width="263" height="16" fill="#4b5b62"/><rect width="395" height="16" fill="#3f5354"/>`;
blocks.forEach(([y, h, bright, dark], i) => {
  const x = 1 + i * 49.2;
  mini += `<rect x="${x}" y="${y}" width="49" height="${h}" fill="${i < 2 ? "#628a69" : "#acd9b6"}"/>`;
  dark.forEach((d) => { mini += `<rect x="${x}" y="${y + d}" width="49" height="1" fill="#2e4a42"/>`; });
  bright.forEach((d) => { mini += `<rect x="${x}" y="${y + d}" width="49" height="1" fill="${i < 2 ? "#98bc84" : "#dff8e5"}"/>`; });
});
mini += `<rect width="1" height="16" fill="#9ac93e"/>`;
document.getElementById("mini").innerHTML = mini;
document.getElementById("ruler").innerHTML = [2, 3, 4, 5, 6, 7]
  .map((n, i) => `<span style="left:${pct(i * BAR, W)}">${n}</span>`).join("");
let ul = "";
for (let i = 0; i < 18; i++) ul += `<path stroke="#182831" d="M${22 + i * 29} 0V10"/>`;
document.getElementById("ulines").innerHTML = ul;
```
